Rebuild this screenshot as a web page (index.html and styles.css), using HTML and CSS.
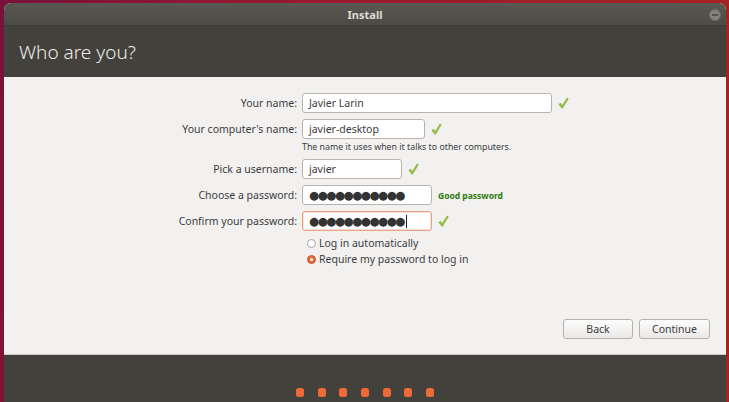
FILE: index.html
```html
<!DOCTYPE html>
<html lang="en">
<head>
<meta charset="utf-8">
<title>Install</title>
<link rel="stylesheet" href="styles.css">
</head>
<body>
<div class="window">
  <div class="titlebar">
    <span class="title">Install</span>
    <span class="close" aria-label="Close"></span>
  </div>
  <div class="header"><h1>Who are you?</h1></div>
  <div class="content">
    <div class="form">
      <div class="row">
        <span class="label">Your name:</span>
        <div class="field">
          <div class="input w-name">Javier Larin</div>
          <svg class="check" viewBox="0 0 11 12" width="11" height="12"><path d="M0.4 7.2 L2.6 5.7 L4.3 8.1 L8.9 0.6 L10.7 1.8 L4.6 11.7 L3.9 11.7 Z"/></svg>
        </div>
      </div>
      <div class="row">
        <span class="label">Your computer's name:</span>
        <div class="field">
          <div class="input w-host">javier-desktop</div>
          <svg class="check" viewBox="0 0 11 12" width="11" height="12"><path d="M0.4 7.2 L2.6 5.7 L4.3 8.1 L8.9 0.6 L10.7 1.8 L4.6 11.7 L3.9 11.7 Z"/></svg>
        </div>
      </div>
      <div class="row hint-row">
        <span class="label"></span>
        <span class="hint">The name it uses when it talks to other computers.</span>
      </div>
      <div class="row">
        <span class="label">Pick a username:</span>
        <div class="field">
          <div class="input w-user">javier</div>
          <svg class="check" viewBox="0 0 11 12" width="11" height="12"><path d="M0.4 7.2 L2.6 5.7 L4.3 8.1 L8.9 0.6 L10.7 1.8 L4.6 11.7 L3.9 11.7 Z"/></svg>
        </div>
      </div>
      <div class="row">
        <span class="label">Choose a password:</span>
        <div class="field">
          <div class="input w-pass"><span class="pw">●●●●●●●●●●●</span></div>
          <span class="status">Good password</span>
        </div>
      </div>
      <div class="row">
        <span class="label">Confirm your password:</span>
        <div class="field">
          <div class="input w-pass focus"><span class="pw">●●●●●●●●●●●</span><span class="caret"></span></div>
          <svg class="check" viewBox="0 0 11 12" width="11" height="12"><path d="M0.4 7.2 L2.6 5.7 L4.3 8.1 L8.9 0.6 L10.7 1.8 L4.6 11.7 L3.9 11.7 Z"/></svg>
        </div>
      </div>
      <div class="radios">
        <div class="radio-row"><span class="label"></span><span class="radio"></span><span class="radio-text">Log in automatically</span></div>
        <div class="radio-row"><span class="label"></span><span class="radio on"></span><span class="radio-text">Require my password to log in</span></div>
      </div>
    </div>
    <div class="actions">
      <button class="btn back">Back</button>
      <button class="btn cont">Continue</button>
    </div>
  </div>
  <div class="footer">
    <span class="dot"></span><span class="dot"></span><span class="dot"></span><span class="dot"></span><span class="dot"></span><span class="dot"></span><span class="dot"></span>
  </div>
</div>
</body>
</html>
```
FILE: styles.css
```css
html, body {
  margin: 0;
  height: 402px;
  overflow: hidden;
}
body {
  background: linear-gradient(100deg, #7a1139 0%, #9a1a30 40%, #a8221f 100%);
  font-family: "Noto Sans", "DejaVu Sans", sans-serif;
  color: #3c3c3c;
}
.window {
  margin: 3px 3px 0 4px;
  width: 722px;
  height: 399px;
  display: flex;
  flex-direction: column;
  border-radius: 7px 7px 0 0;
  overflow: hidden;
  background: #f2f1f0;
}
.titlebar {
  height: 23px;
  flex: none;
  box-sizing: border-box;
  background: linear-gradient(#5a5853, #4c4a45);
  border-bottom: 1px solid #3d3b37;
  position: relative;
  display: flex;
  align-items: center;
  justify-content: center;
}
.title {
  color: #dfdbd2;
  font-size: 11px;
  font-weight: bold;
}
.close {
  position: absolute;
  right: 5px;
  top: 6px;
  width: 12px;
  height: 12px;
  box-sizing: border-box;
  border-radius: 50%;
  background: #83817c;
  border: 1px solid #6f6d68;
}
.close::after {
  content: "";
  position: absolute;
  left: 2px;
  top: 4px;
  width: 6px;
  height: 2px;
  background: #55534e;
}
.header {
  height: 51px;
  flex: none;
  box-sizing: border-box;
  background: #43413c;
  display: flex;
  align-items: center;
  padding-left: 15px;
}
.header h1 {
  margin: 0;
  font-weight: 300;
  font-size: 19px;
  color: #eeece8;
}
.content {
  height: 278px;
  flex: none;
  box-sizing: border-box;
  border-bottom: 1px solid #cfcdca;
  display: flex;
  flex-direction: column;
  padding: 16px 16px 15px 0;
}
.form {
  display: flex;
  flex-direction: column;
  gap: 6px;
}
.row {
  display: flex;
  align-items: center;
  height: 20px;
  gap: 5px;
}
.label {
  width: 293px;
  flex: none;
  text-align: right;
  font-size: 10.5px;
  color: #3c3c3c;
}
.field {
  display: flex;
  align-items: center;
  gap: 6px;
}
.input {
  height: 20px;
  box-sizing: border-box;
  border: 1px solid #b7b4af;
  border-radius: 3px;
  background: #fff;
  padding-left: 6px;
  font-size: 10.5px;
  color: #3c3c3c;
  display: flex;
  align-items: center;
}
.w-name { width: 250px; }
.w-host { width: 123px; }
.w-user { width: 100px; }
.w-pass { width: 130px; }
.input.focus {
  border-color: #e9a080;
  box-shadow: inset 0 0 0 1px #fbe3d8;
}
.pw {
  font-family: "DejaVu Sans", sans-serif;
  font-size: 11.5px;
  color: #333;
  letter-spacing: -1.4px;
}
.caret {
  width: 1px;
  height: 13px;
  background: #222;
  margin-left: 2px;
}
.check {
  fill: #93bd45;
  flex: none;
}
.status {
  font-size: 8.5px;
  font-weight: bold;
  color: #2e7a0b;
}
.hint-row {
  height: 12px;
  margin-top: -4px;
}
.hint {
  font-size: 8.8px;
  color: #3c3c3c;
}
.radios {
  margin-top: -2px;
  display: flex;
  flex-direction: column;
}
.radio-row {
  height: 16px;
  display: flex;
  align-items: center;
}
.radio-row .label {
  margin-right: 10px;
}
.radio {
  width: 9px;
  height: 9px;
  box-sizing: border-box;
  border-radius: 50%;
  border: 1px solid #a9a6a1;
  background: #fff;
  margin-right: 3px;
  position: relative;
}
.radio.on {
  background: #e8693a;
  border-color: #c9552a;
}
.radio.on::after {
  content: "";
  position: absolute;
  left: 2px;
  top: 2px;
  width: 3px;
  height: 3px;
  border-radius: 50%;
  background: #fff;
}
.radio-text {
  font-size: 10.5px;
  color: #3c3c3c;
}
.actions {
  margin-top: auto;
  display: flex;
  justify-content: flex-end;
  gap: 6px;
}
.btn {
  height: 20px;
  padding: 0;
  font-family: inherit;
  font-size: 10.5px;
  color: #3c3c3c;
  background: linear-gradient(#fcfcfc, #ebe9e7);
  border: 1px solid #b5b2ad;
  border-radius: 3px;
}
.back { width: 70px; }
.cont { width: 71px; }
.footer {
  flex: 1;
  background: #43413c;
  display: flex;
  justify-content: center;
  align-items: flex-start;
  gap: 13.7px;
  padding-top: 33px;
}
.dot {
  width: 8px;
  height: 9px;
  border-radius: 2.5px;
  background: #ee6b37;
}
```
